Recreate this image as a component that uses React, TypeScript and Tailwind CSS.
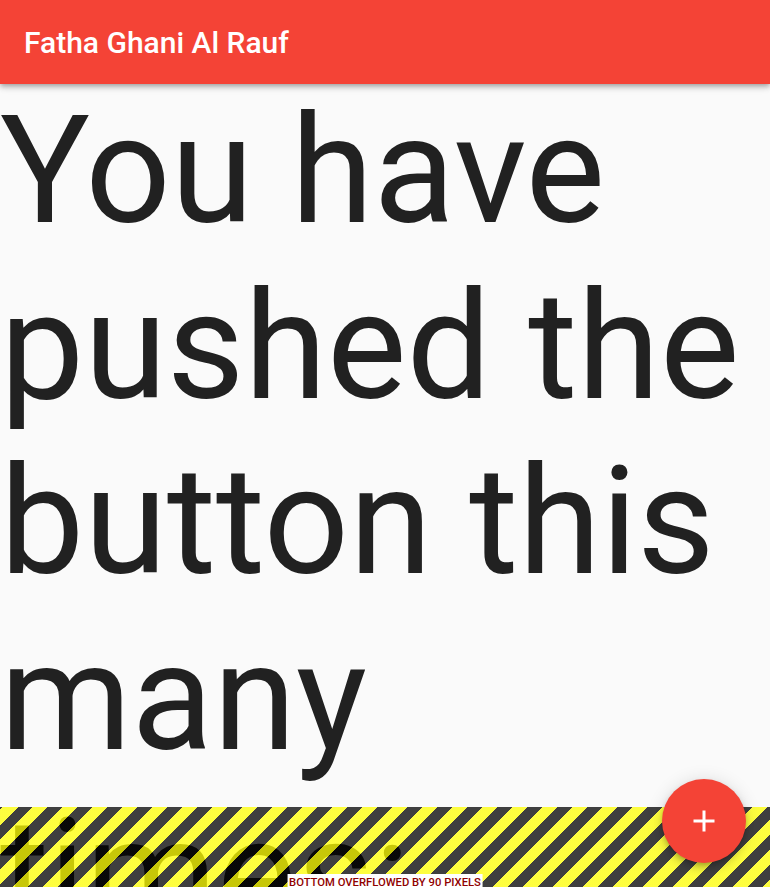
import { useState } from "react";

const roboto = { fontFamily: "Roboto, 'Liberation Sans', sans-serif" };

function AddIcon() {
  return (
    <svg viewBox="0 0 24 24" className="w-9 h-9" fill="#ffffff">
      <path d="M19 13h-6v6h-2v-6H5v-2h6V5h2v6h6v2z" />
    </svg>
  );
}

// debug overflow stripes painted over the bottom of the body
function OverflowIndicator({ pixels }: { pixels: number }) {
  return (
    <div className="absolute left-0 right-0 bottom-0 h-[80px] bg-[repeating-linear-gradient(135deg,rgba(0,0,0,0.75)_0px,rgba(0,0,0,0.75)_2.12px,rgba(255,255,0,0.75)_2.12px,rgba(255,255,0,0.75)_12.73px,rgba(0,0,0,0.75)_12.73px,rgba(0,0,0,0.75)_21.21px)]">
      <span className="absolute top-[67px] left-1/2 -translate-x-1/2 whitespace-nowrap bg-white px-[1.5px] py-[1.5px] text-[11.25px] leading-[13.2px] font-medium text-[#900000]">
        BOTTOM OVERFLOWED BY {pixels} PIXELS
      </span>
    </div>
  );
}

export default function App() {
  const [counter, setCounter] = useState(0);

  return (
    <div className="relative flex flex-col h-screen w-full overflow-hidden bg-[#fafafa]" style={roboto}>
      {/* App bar */}
      <header className="relative z-10 flex items-center h-[84px] shrink-0 px-6 bg-[#f44336] shadow-[0_2px_4px_-1px_rgba(0,0,0,0.2),0_4px_5px_0_rgba(0,0,0,0.14),0_1px_10px_0_rgba(0,0,0,0.12)]">
        <h1 className="text-[30px] leading-[35px] font-medium text-white">Fatha Ghani Al Rauf</h1>
      </header>

      {/* Body */}
      <main className="relative flex-1 overflow-hidden">
        <div className="flex flex-col">
          <p className="text-[150px] leading-[175.7px] font-normal text-[#212121]">
            You have pushed the button this many times:
          </p>
          <p className="text-[51px] leading-[60px] text-[#757575] text-center">{counter}</p>
        </div>
        <OverflowIndicator pixels={90} />
      </main>

      {/* FAB */}
      <button
        onClick={() => setCounter(counter + 1)}
        className="absolute right-6 bottom-6 z-20 flex items-center justify-center w-[84px] h-[84px] rounded-full bg-[#f44336] shadow-[0_3px_5px_-1px_rgba(0,0,0,0.2),0_6px_10px_0_rgba(0,0,0,0.14),0_1px_18px_0_rgba(0,0,0,0.12)]"
      >
        <AddIcon />
      </button>
    </div>
  );
}
